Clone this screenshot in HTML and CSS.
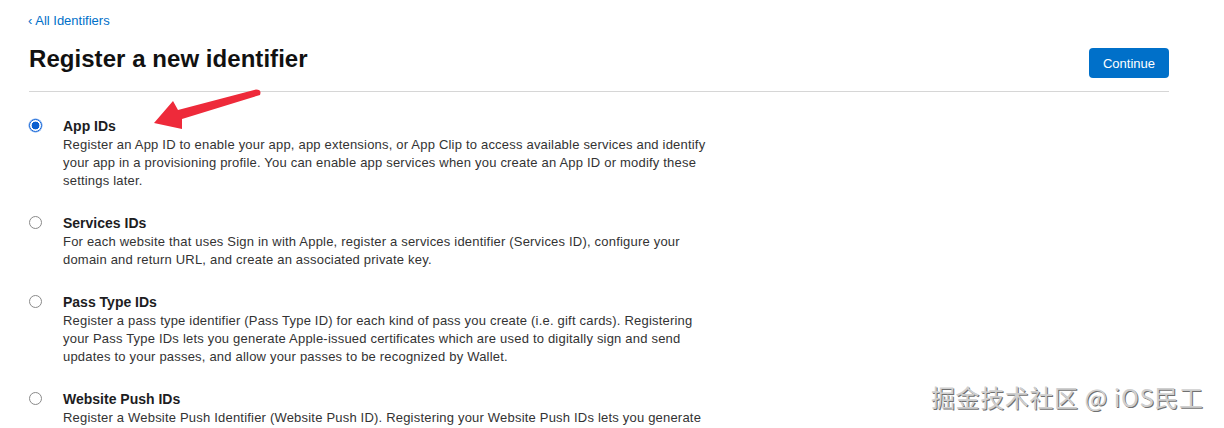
FILE: index.html
```html
<!DOCTYPE html>
<html>
<head>
<meta charset="utf-8">
<link rel="stylesheet" href="styles.css">
</head>
<body>
<div class="page">
  <a class="back" href="#">&lsaquo; All Identifiers</a>
  <div class="header">
    <h1 class="title">Register a new identifier</h1>
    <button class="btn">Continue</button>
  </div>
  <div class="list">
    <div class="item">
      <span class="radio checked"></span>
      <div class="body">
        <div class="name">App IDs</div>
        <p class="desc">Register an App ID to enable your app, app extensions, or App Clip to access available services and identify<br>your app in a provisioning profile. You can enable app services when you create an App ID or modify these<br>settings later.</p>
      </div>
    </div>
    <div class="item">
      <span class="radio"></span>
      <div class="body">
        <div class="name">Services IDs</div>
        <p class="desc">For each website that uses Sign in with Apple, register a services identifier (Services ID), configure your<br>domain and return URL, and create an associated private key.</p>
      </div>
    </div>
    <div class="item">
      <span class="radio"></span>
      <div class="body">
        <div class="name">Pass Type IDs</div>
        <p class="desc">Register a pass type identifier (Pass Type ID) for each kind of pass you create (i.e. gift cards). Registering<br>your Pass Type IDs lets you generate Apple-issued certificates which are used to digitally sign and send<br>updates to your passes, and allow your passes to be recognized by Wallet.</p>
      </div>
    </div>
    <div class="item">
      <span class="radio"></span>
      <div class="body">
        <div class="name">Website Push IDs</div>
        <p class="desc">Register a Website Push Identifier (Website Push ID). Registering your Website Push IDs lets you generate</p>
      </div>
    </div>
  </div>
  <svg class="arrow" width="120" height="50" viewBox="0 0 120 50">
    <path d="M108 1.5 Q114 1.5 112 7 L34 31 L34 41 L6 35 L25 13 L30 22 Z" fill="#ee2a3a"/>
  </svg>
  <div class="watermark">掘金技术社区 @ iOS民工</div>
</div>
</body>
</html>
```
FILE: styles.css
```css
* { box-sizing: border-box; }
html, body { margin: 0; padding: 0; background: #fff; overflow: hidden; }
body { font-family: "Liberation Sans", Arial, sans-serif; color: #1d1d1f; }
.page { position: relative; width: 1224px; height: 428px; padding: 12px 55px 0 29px; overflow: hidden; }
.back { display: block; color: #0070c9; font-size: 13px; line-height: 17px; text-decoration: none; margin-left: -1px; }
.header { display: flex; justify-content: space-between; align-items: flex-start; margin-top: 15px; padding-bottom: 13px; border-bottom: 1px solid #d6d6d6; }
.title { margin: 0; font-size: 24px; font-weight: 700; line-height: 30px; color: #111; letter-spacing: 0.05px; }
.btn { background: #0070c9; color: #fff; border: none; border-radius: 4px; font-family: inherit; font-size: 13px; width: 80px; height: 30px; padding: 0; margin-top: 4px; }
.list { padding-top: 25px; }
.item { display: flex; margin-bottom: 24px; }
.radio { flex: none; width: 13px; height: 13px; border-radius: 50%; border: 1px solid #8a8a8a; margin-top: 2px; margin-right: 21px; background: #fff; }
.radio.checked { border: 1.5px solid #0a60d8; background: radial-gradient(circle, #0a5fd0 0 3.6px, #fff 4.2px); box-shadow: 0 0 0 0.5px #6ea0e8; }
.body { white-space: nowrap; }
.name { font-size: 14px; font-weight: 700; line-height: 19px; color: #1d1d1f; }
.desc { margin: 0; font-size: 13px; line-height: 18px; color: #333; letter-spacing: 0.2px; }
.arrow { position: absolute; left: 148px; top: 88px; }
.watermark { position: absolute; left: 931px; top: 382px; font-family: "Noto Sans CJK SC", sans-serif; font-size: 24px; line-height: 30px; color: #cfcfcf; text-shadow: 1px 1px 0 #707070, -1px -1px 0 #fff; letter-spacing: 0.6px; }
```
